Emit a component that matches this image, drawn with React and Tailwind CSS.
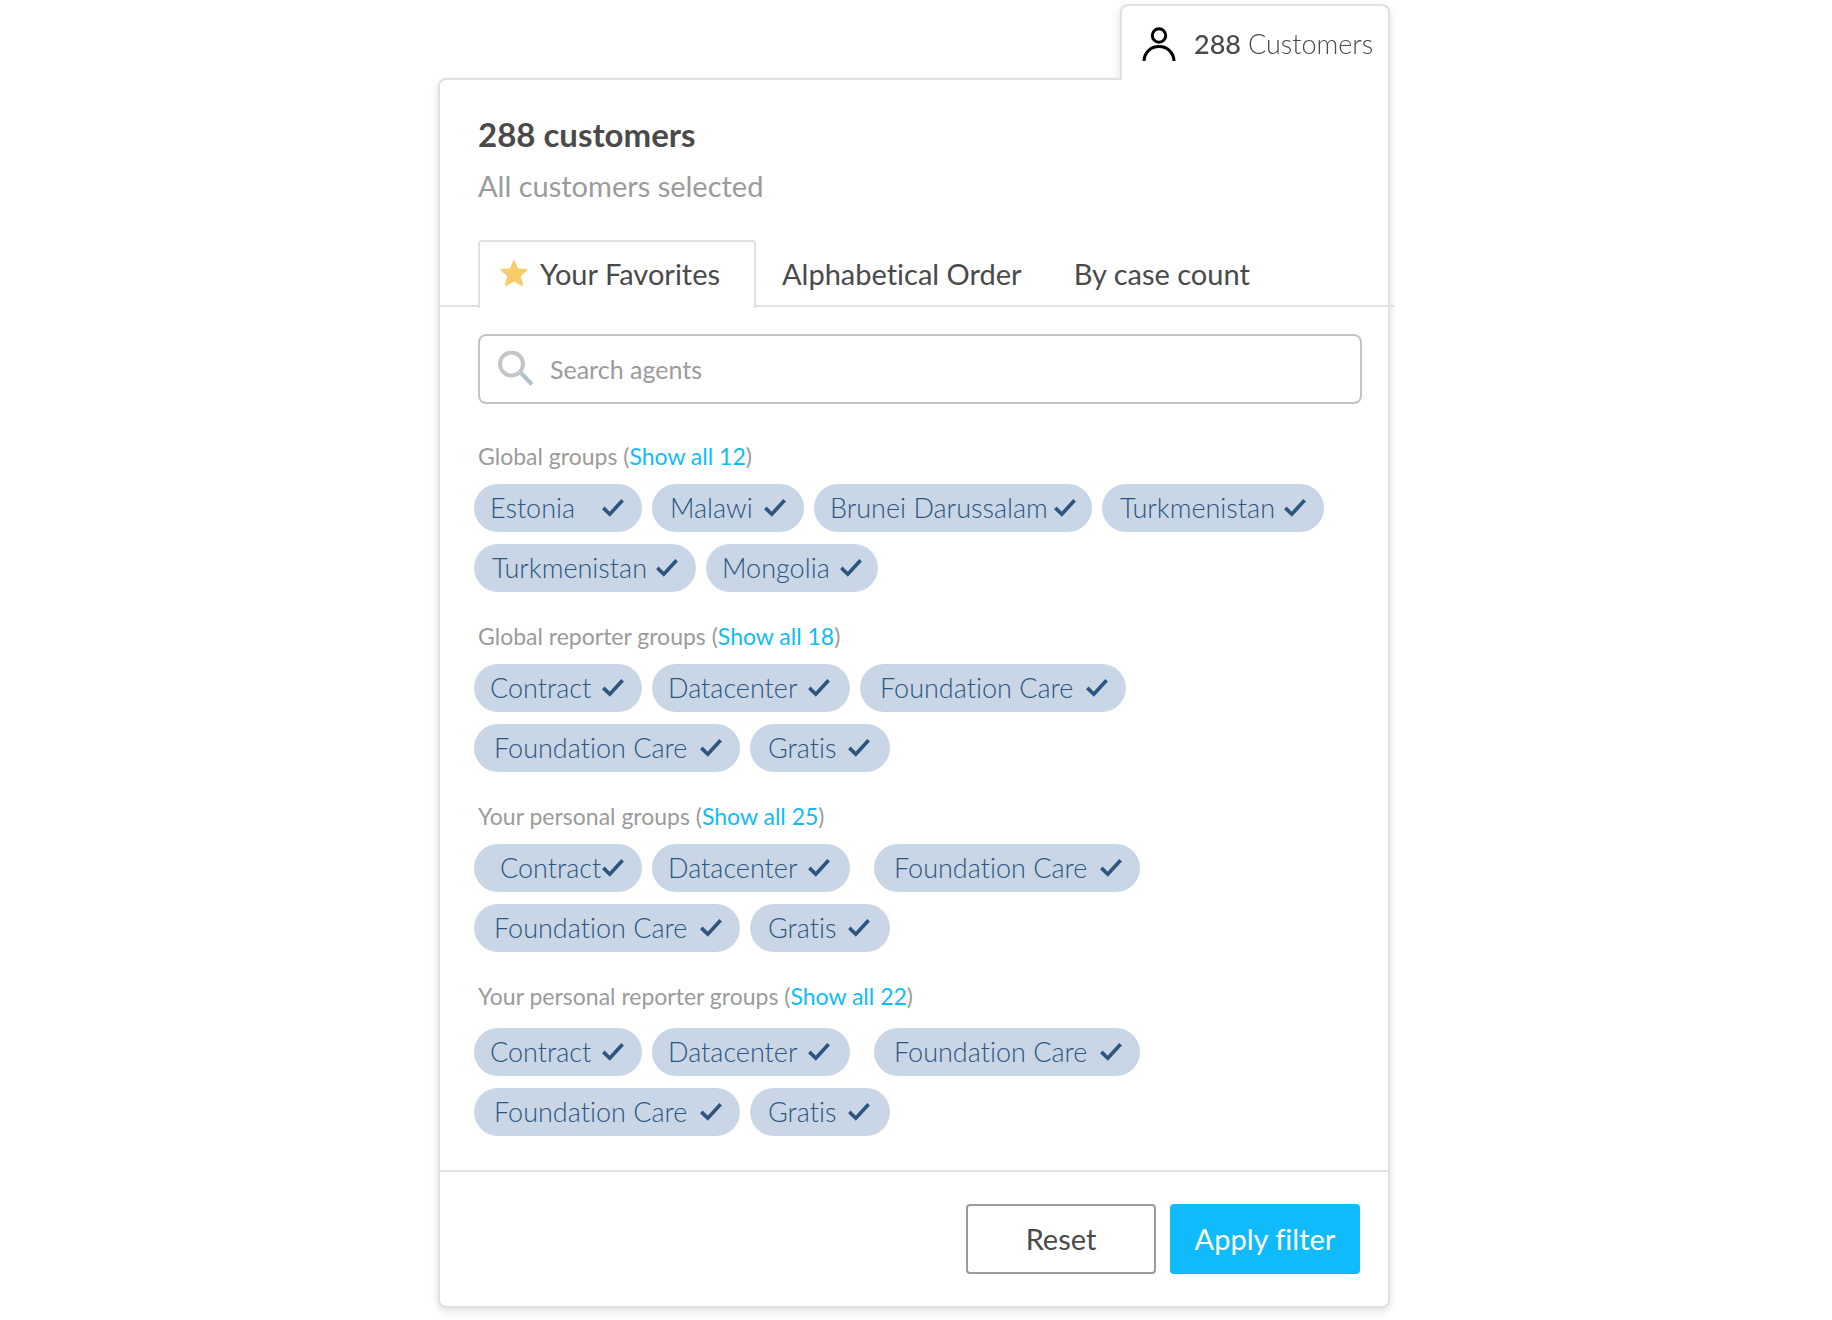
import { useState } from "react";

const groups = [
  {
    title: "Global groups",
    total: 12,
    top: "mt-3",
    rows: [
      [
        { name: "Estonia", size: "w-[168px] pl-4 pr-[18px]" },
        { name: "Malawi", size: "w-[152px] pl-[18px] pr-[18px]" },
        { name: "Brunei Darussalam", size: "w-[278px] pl-4 pr-4" },
        { name: "Turkmenistan", size: "w-[222px] pl-[18px] pr-[18px]" },
      ],
      [
        { name: "Turkmenistan", size: "w-[222px] pl-[18px] pr-[18px]" },
        { name: "Mongolia", size: "w-[172px] pl-4 pr-4" },
      ],
    ],
  },
  {
    title: "Global reporter groups",
    total: 18,
    top: "mt-3",
    rows: [
      [
        { name: "Contract", size: "w-[168px] pl-4 pr-[18px]" },
        { name: "Datacenter", size: "w-[198px] pl-4 pr-5" },
        { name: "Foundation Care", size: "w-[266px] pl-5 pr-[18px]" },
      ],
      [
        { name: "Foundation Care", size: "w-[266px] pl-5 pr-[18px]" },
        { name: "Gratis", size: "w-[140px] pl-[18px] pr-5" },
      ],
    ],
  },
  {
    title: "Your personal groups",
    total: 25,
    top: "mt-3",
    rows: [
      [
        { name: "Contract", size: "w-[168px] pl-[26px] pr-[18px]" },
        { name: "Datacenter", size: "w-[198px] pl-4 pr-5" },
        { name: "Foundation Care", size: "w-[266px] pl-5 pr-[18px] ml-[14px]" },
      ],
      [
        { name: "Foundation Care", size: "w-[266px] pl-5 pr-[18px]" },
        { name: "Gratis", size: "w-[140px] pl-[18px] pr-5" },
      ],
    ],
  },
  {
    title: "Your personal reporter groups",
    total: 22,
    top: "mt-4",
    rows: [
      [
        { name: "Contract", size: "w-[168px] pl-4 pr-[18px]" },
        { name: "Datacenter", size: "w-[198px] pl-4 pr-5" },
        { name: "Foundation Care", size: "w-[266px] pl-5 pr-[18px] ml-[14px]" },
      ],
      [
        { name: "Foundation Care", size: "w-[266px] pl-5 pr-[18px]" },
        { name: "Gratis", size: "w-[140px] pl-[18px] pr-5" },
      ],
    ],
  },
];

function Chip({ name, size }) {
  const [on, setOn] = useState(true);

  return (
    <button
      type="button"
      aria-pressed={on}
      onClick={() => setOn(!on)}
      className={`flex h-12 items-center justify-between rounded-full bg-[#c9d6e6] text-[27px] leading-8 font-light whitespace-nowrap text-[#2d5580] ${size}`}
    >
      {name}
      {on && (
        <svg className="h-[18px] w-[22px] shrink-0" viewBox="0 0 22 18" fill="none" stroke="#2d5580" strokeWidth="3.6">
          <path d="M1.3 8.9 L7.8 15.2 L20.6 1.2" />
        </svg>
      )}
    </button>
  );
}

export default function App() {
  const [tab, setTab] = useState("favorites");
  const [search, setSearch] = useState("");

  const tabStyle = (id) =>
    tab === id
      ? "border-[#e1e1e1] bg-white"
      : "border-transparent";

  return (
    <div className="bg-white pt-1 pr-1 pb-3 font-['Lato',sans-serif] text-[#4a4a4a] [font-variant-ligatures:none]">
      <div className="mx-auto flex w-full max-w-[952px] flex-col drop-shadow-[0_3px_4px_rgba(0,0,0,0.12)]">

        {/* CUSTOMERS TAB */}
        <div className="relative z-10 -mb-[2px] flex h-[76px] w-[270px] items-center self-end rounded-t-lg border-2 border-b-0 border-[#e1e1e1] bg-white pt-px pr-3 pl-5 text-[27px] leading-8">
          <svg className="mr-[18px] h-[34px] w-[34px] shrink-0" viewBox="0 0 34 34" fill="none" stroke="#000" strokeWidth="3">
            <circle cx="17" cy="8.5" r="6.7" />
            <path d="M2 34 C2.4 25.6 8.6 19.6 17 19.6 C25.4 19.6 31.6 25.6 32 34" />
          </svg>
          <span className="whitespace-pre"><b className="font-medium">288</b> <span className="font-light">Customers</span></span>
        </div>

        <div className="rounded-lg rounded-tr-none border-2 border-[#e1e1e1] bg-white">
          <div className="pt-[34px] pl-[38px]">
            <h1 className="text-[33px] leading-10 font-bold">288 customers</h1>
            <p className="mt-[14px] text-[29px] leading-9 text-[#9b9b9b]">All customers selected</p>
          </div>

          {/* TABS */}
          <div role="tablist" className="-mr-[6px] mt-9 flex h-[67px] border-b-2 border-[#e1e1e1] pl-[38px] text-[29px] leading-9">
            <button
              role="tab"
              aria-selected={tab === "favorites"}
              onClick={() => setTab("favorites")}
              className={`flex h-[68px] w-[278px] items-center rounded-t border-2 border-b-0 pb-[2px] pl-5 ${tabStyle("favorites")}`}
            >
              <svg className="mr-3 h-7 w-7" viewBox="0 0 28 28" fill="#facb6b">
                <path d="M14 0.2 Q14.7 0.2 15 1 L18 8.4 L26.6 9 Q28.4 9.4 27 10.8 L20.8 16 L23 24.6 Q23 26.4 21.4 25.8 L14 21.4 L6.6 25.8 Q5 26.4 5 24.6 L7.2 16 L1 10.8 Q-0.4 9.4 1.4 9 L10 8.4 L13 1 Q13.3 0.2 14 0.2 Z" />
              </svg>
              Your Favorites
            </button>
            <button
              role="tab"
              aria-selected={tab === "alphabetical"}
              onClick={() => setTab("alphabetical")}
              className={`h-[68px] rounded-t border-2 border-b-0 px-6 pb-[2px] ${tabStyle("alphabetical")}`}
            >
              Alphabetical Order
            </button>
            <button
              role="tab"
              aria-selected={tab === "count"}
              onClick={() => setTab("count")}
              className={`h-[68px] rounded-t border-2 border-b-0 px-6 pb-[2px] ${tabStyle("count")}`}
            >
              By case count
            </button>
          </div>

          {/* SEARCH */}
          <label className="mt-[27px] mr-[26px] ml-[38px] flex h-[70px] items-center rounded-lg border-2 border-[#c4c4c4] pl-[18px]">
            <svg className="h-9 w-9 shrink-0" viewBox="0 0 36 36" fill="none" stroke="#c2c6c8">
              <circle cx="13.5" cy="13" r="11.5" strokeWidth="4" />
              <path d="M22.5 21.5 L34 33.5" strokeWidth="4.6" />
              <path d="M24.5 23.8 L33 32.2" stroke="#6fbfd8" strokeWidth="1" />
            </svg>
            <input
              type="text"
              aria-label="Search agents"
              placeholder="Search agents"
              value={search}
              onChange={(e) => setSearch(e.target.value)}
              className="ml-4 min-w-0 flex-1 text-[25px] leading-8 outline-none placeholder:text-[#9b9b9b]"
            />
          </label>

          {/* GROUPS */}
          <div className="mt-9 flex flex-col gap-7 px-[34px] pb-[34px]">
            {groups.map((g) => (
              <section key={g.title}>
                <h2 className="pl-1 text-[23px] leading-8 text-[#9b9b9b]">
                  {g.title} (<a href="#" className="text-[#10bbfb]">Show all {g.total}</a>)
                </h2>
                <div className={`flex flex-col gap-3 ${g.top}`}>
                  {g.rows.map((row, i) => (
                    <div key={i} className="flex gap-[10px]">
                      {row.map((c) => (
                        <Chip key={c.name} name={c.name} size={c.size} />
                      ))}
                    </div>
                  ))}
                </div>
              </section>
            ))}
          </div>

          {/* ACTIONS */}
          <div className="flex justify-end gap-[14px] border-t-2 border-[#e1e1e1] py-8 pr-7 text-[29px] leading-9">
            <button className="h-[70px] w-[190px] rounded border-2 border-[#9b9b9b]">Reset</button>
            <button className="h-[70px] w-[190px] rounded bg-[#10bbfb] text-white">Apply filter</button>
          </div>
        </div>

      </div>
    </div>
  );
}
